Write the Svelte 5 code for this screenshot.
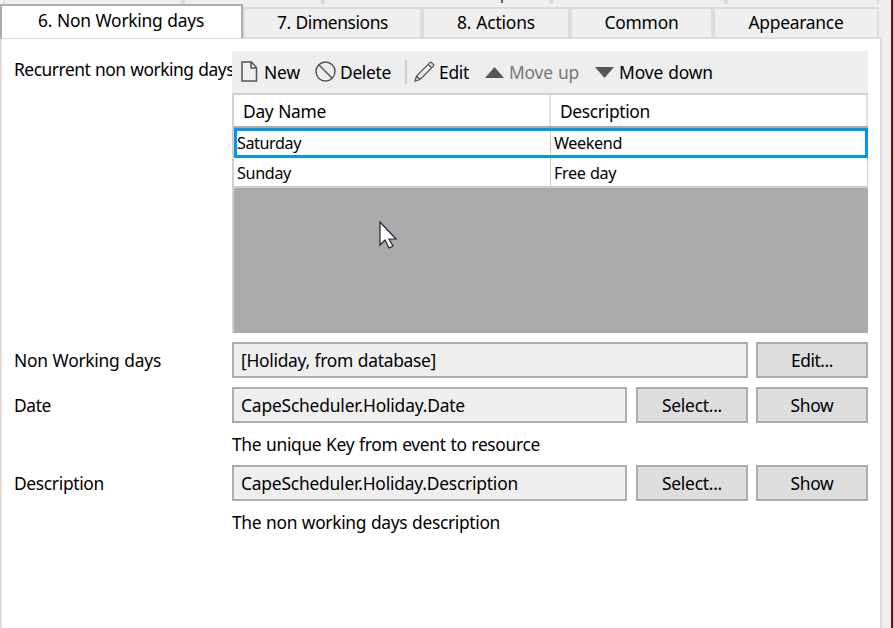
<script>
  const upperTabs = [2, 178, 136, 224, 171, 149];
  const tabs = [
    { text: '7. Dimensions', width: 179, ink: 110 },
    { text: '8. Actions', width: 148, ink: 77 },
    { text: 'Common', width: 143, ink: 73 },
    { text: 'Appearance', width: 166, ink: 94 }
  ];
  const rows = [
    { name: 'Saturday', nameInk: 64, note: 'Weekend', noteInk: 68, selected: true },
    { name: 'Sunday', nameInk: 54, note: 'Free day', noteInk: 62, selected: false }
  ];
  const fields = [
    { label: 'Non Working days', labelInk: 147, value: '[Holiday, from database]', ink: 195, buttons: [{ text: 'Edit...', ink: 42 }] },
    { label: 'Date', labelInk: 37, value: 'CapeScheduler.Holiday.Date', ink: 224, buttons: [{ text: 'Select...', ink: 60 }, { text: 'Show', ink: 43 }], hint: 'The unique Key from event to resource', hintInk: 308 },
    { label: 'Description', labelInk: 90, value: 'CapeScheduler.Holiday.Description', ink: 277, buttons: [{ text: 'Select...', ink: 60 }, { text: 'Show', ink: 43 }], hint: 'The non working days description', hintInk: 268 }
  ];

  // Tightens the tracking so that a caption takes up the given width.
  function fit(node, width) {
    const natural = node.getBoundingClientRect().width;
    node.style.letterSpacing = (width - natural) / node.textContent.length + 'px';
  }
</script>

{#snippet t(text, width)}<span class="text" use:fit={width}>{text}</span>{/snippet}

<div class="window">
  <div class="main">
    <div class="upper">
      {#each upperTabs as width, i}
        <div class="upper-tab" style:width="{width}px">
          {#if i === 3}<span class="tail"></span>{/if}
        </div>
      {/each}
    </div>
    <div class="tabs">
      <div class="tab active">{@render t('6. Non Working days', 166)}</div>
      {#each tabs as tab}
        <div class="tab" style:width="{tab.width}px">{@render t(tab.text, tab.ink + 1)}</div>
      {/each}
      <div class="rest"></div>
    </div>
    <div class="panel">
      <div class="line days">
        <div class="label">{@render t('Recurrent non working days', 220)}</div>
        <div class="grid">
          <div class="toolbar">
            <div class="tool new">
              <svg width="18" height="22" viewBox="0 0 18 22"><path d="M1 1h9.500L15.500 6.500V20H1zM10 1v6h5.500" /></svg>
              {@render t('New', 36)}
            </div>
            <div class="tool delete">
              <svg width="22" height="22" viewBox="0 0 22 22"><circle cx="10.500" cy="10.500" r="9.500" /><path d="M3.800 3.800l13.400 13.400" /></svg>
              {@render t('Delete', 51)}
            </div>
            <i class="divider"></i>
            <div class="tool edit">
              <svg width="22" height="22" viewBox="0 0 22 22"><path d="M1 20l1.500-5L15.900 1.600q.8-.7 1.600 0l1.900 1.900q.7.800 0 1.600L6 18.500zM2.500 15l3.500 3.500M14.200 3.300l3.500 3.500" /></svg>
              {@render t('Edit', 30)}
            </div>
            <div class="tool up">
              <svg width="19" height="11" viewBox="0 0 19 11"><path class="solid" d="M9.500 0L19 11H0z" /></svg>
              {@render t('Move up', 70)}
            </div>
            <div class="tool down">
              <svg width="19" height="11" viewBox="0 0 19 11"><path class="solid" d="M0 0h19L9.500 11z" /></svg>
              {@render t('Move down', 94)}
            </div>
          </div>
          <div class="table">
            <div class="head">
              <div class="cell">{@render t('Day Name', 83)}</div>
              <div class="cell">{@render t('Description', 90)}</div>
            </div>
            {#each rows as row}
              <div class="row" class:selected={row.selected}>
                <div class="cell">{@render t(row.name, row.nameInk)}</div>
                <div class="cell">{@render t(row.note, row.noteInk)}</div>
              </div>
            {/each}
            <svg class="cursor" width="20" height="29" viewBox="0 0 20 29"><path d="M1 1v23l5-5 4 8 4-2-4-7h7z" /></svg>
          </div>
        </div>
      </div>
      {#each fields as field}
        <div class="line field">
          <div class="label">{@render t(field.label, field.labelInk)}</div>
          <div class="input">{@render t(field.value, field.ink)}</div>
          {#each field.buttons as button, i}
            <button class:first={i === 0 && field.buttons.length > 1}>{@render t(button.text, button.ink)}</button>
          {/each}
        </div>
        {#if field.hint}<div class="hint">{@render t(field.hint, field.hintInk)}</div>{/if}
      {/each}
    </div>
  </div>
  <div class="edge"></div>
</div>

<style>
  .window, .window * { box-sizing: border-box; }
  .window {
    display: flex;
    width: 894px;
    height: 628px;
    overflow: hidden;
    background: #efefef;
    color: #000;
    font: 17.4px/24px 'Noto Sans', 'Open Sans', sans-serif;
    word-spacing: 0.6px;
  }
  .text { white-space: pre; display: inline-block; }
  .main { width: 882px; display: flex; flex-direction: column; }
  .edge { margin-left: 9px; width: 3px; background: #6b1010; border-right: 1px solid #d8c4c4; }

  .upper { display: flex; height: 4px; padding-left: 3px; }
  .upper-tab { flex: none; border-right: 4px solid #dcdcdc; box-sizing: content-box !important; }
  .upper-tab:first-child { width: 0 !important; border-right-width: 2px; margin-right: 176px; }
  .upper-tab:nth-child(2) { width: 0 !important; }
  .upper-tab:last-child { border-right-width: 2px; }
  .tail { display: block; width: 2px; height: 3px; margin-left: 176px; background: #3d6584; }

  .tabs { display: flex; align-items: flex-end; height: 35px; }
  .tab {
    flex: none;
    display: flex;
    align-items: center;
    justify-content: center;
    height: 32px;
    border: 2px solid #dcdcdc;
    padding: 0 0 2px;
  }
  .tab.active {
    width: 243px;
    height: 35px;
    background: #fff;
    border: 2px solid #adadad;
    border-bottom: 1px solid #dcdcdc;
    padding: 0 1px 4px 0;
  }
  .rest { flex: 1; height: 2px; background: #dcdcdc; }

  .panel {
    flex: 1;
    background: #fff;
    border: solid #dcdcdc;
    border-width: 0 2px;
    padding: 12px 12px 0;
  }
  .line { display: flex; }
  .label { width: 218px; flex: none; white-space: nowrap; }
  .days .label { padding-top: 6px; }
  .grid { position: relative; width: 636px; }
  .toolbar {
    display: flex;
    align-items: center;
    height: 42px;
    background: #eee;
    padding-left: 9px;
  }
  .tool { display: flex; align-items: center; height: 42px; }
  .tool svg { flex: none; fill: none; stroke: #555; stroke-width: 1.5; }
  .tool .solid { fill: #555; stroke: none; }
  .new { width: 74px; gap: 5px; }
  .delete { width: 90px; gap: 3px; }
  .divider { width: 2px; height: 24px; background: #cdcdcd; }
  .edit { margin-left: 7px; width: 71px; gap: 3px; }
  .edit svg { stroke-width: 1.3; }
  .up { width: 110px; gap: 5px; color: #777; }
  .down { gap: 5px; }

  .table {
    position: relative;
    height: 240px;
    border-top: 2px solid #d0d0d0;
    border-left: 2px solid #d0d0d0;
    background: #ababab;
  }
  .head { display: flex; height: 33px; background: #fff; border-bottom: 2px solid #ababab; }
  .head .cell { width: 317px; padding: 4px 0 0 9px; border-right: 2px solid #e2e2e2; height: 31px; }
  .row {
    display: flex;
    height: 30px;
    background: #fff;
    border-bottom: 2px solid #ccc;
    font-size: 16.2px;
  }
  .row .cell { width: 317px; padding: 3px 0 0 3px; border-right: 1px solid #ccc; }
  .row.selected { border: 3px solid #0097ee; }
  .row.selected .cell { padding: 0; width: 314px; }
  .row.selected .cell + .cell { padding-left: 3px; border: 0; }
  .cursor { position: absolute; left: 145px; top: 126px; fill: #fff; stroke: #222238; stroke-width: 1.2; }

  .field { height: 36px; margin-top: 9px; }
  .field .label { padding-top: 6px; }
  .input {
    flex: 1;
    height: 36px;
    border: 2px solid #abadb3;
    background: #efefef;
    padding: 4px 0 0 7px;
  }
  button {
    width: 112px;
    height: 36px;
    margin: 0 0 0 8px;
    padding: 0;
    border: 2px solid #adadad;
    background: #ddd;
    color: #000;
    font: inherit;
    word-spacing: inherit;
  }
  button.first { margin-left: 9px; }
  .hint { height: 33px; padding: 9px 0 0 218px; }
</style>
